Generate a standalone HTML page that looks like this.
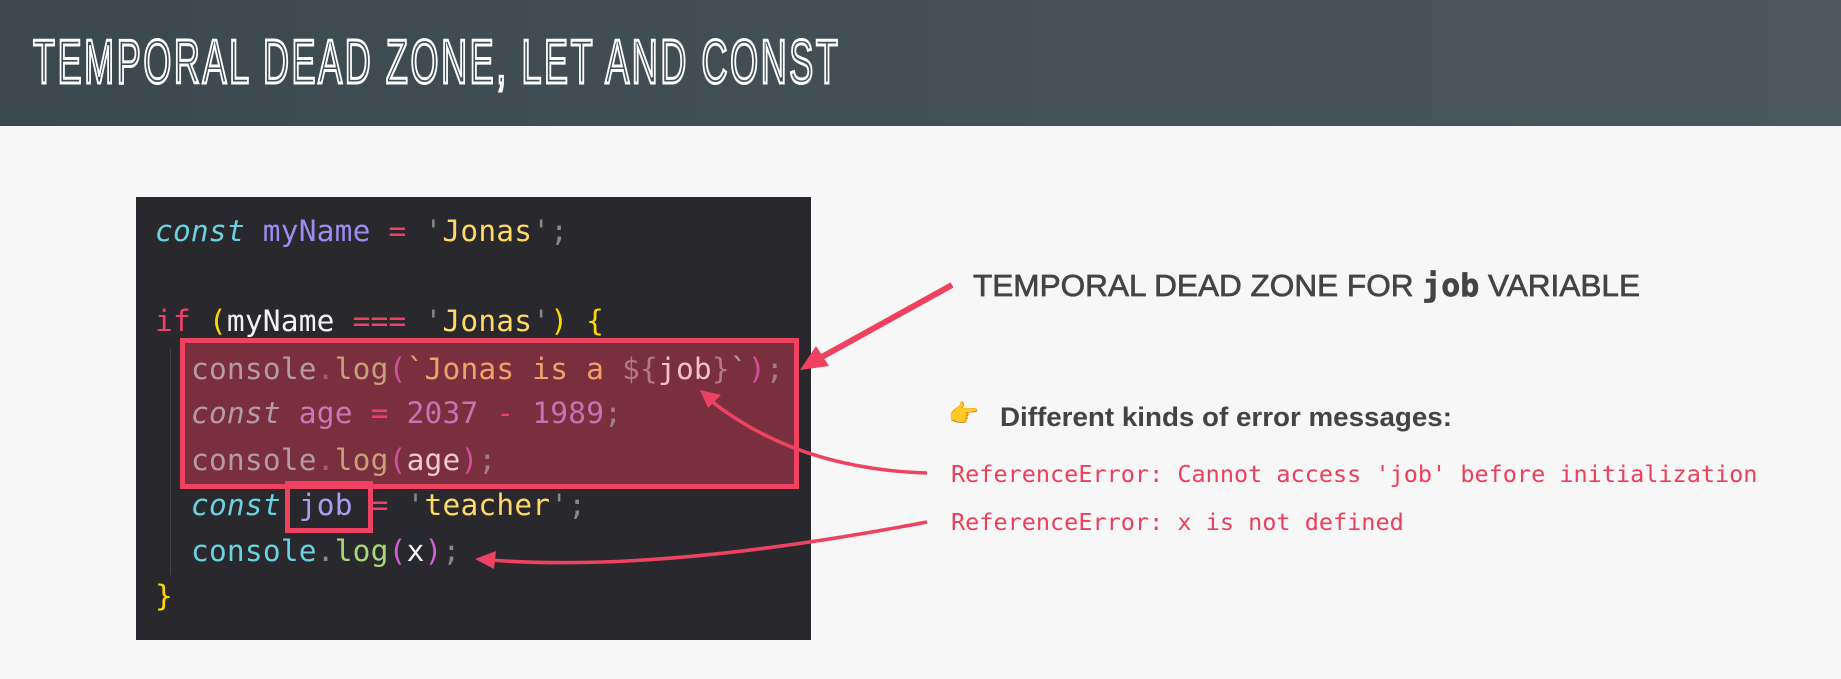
<!DOCTYPE html>
<html><head><meta charset="utf-8"><style>
html,body{margin:0;padding:0}
body{width:1841px;height:679px;background:#f7f7f7;position:relative;overflow:hidden;font-family:"Liberation Sans",sans-serif}
.hdr{position:absolute;left:0;top:0;width:1841px;height:126px;background:linear-gradient(90deg,#3b494f,#4a585d)}
.code{position:absolute;left:136px;top:197px;width:675px;height:443px;background:#29292d}
.ln{position:absolute;font-family:"DejaVu Sans Mono","Liberation Mono",monospace;font-size:29.5px;white-space:pre;line-height:40px;letter-spacing:0.2px}
.i{font-style:italic}
.rbox{position:absolute;left:180px;top:338px;width:609px;height:141px;background:#7a2f3f;border:5px solid #ef4260}
.jbox{position:absolute;left:285px;top:481px;width:78px;height:42px;border:5px solid #ef4260}
.guide{position:absolute;left:170px;top:349px;width:1px;height:226px;background:#444}
.err{position:absolute;left:951px;font-family:"DejaVu Sans Mono","Liberation Mono",monospace;font-size:23.5px;color:#ec3f5c;white-space:pre}
.ttl{position:absolute;left:33px;top:28px;font-family:"Liberation Sans",sans-serif;font-size:62px;line-height:70px;color:transparent;-webkit-text-stroke:3px #fff;white-space:pre;transform:scaleX(0.58);transform-origin:0 0;letter-spacing:4.5px}
</style></head><body>
<div class="hdr"></div>
<div class="ttl">TEMPORAL DEAD ZONE, LET AND CONST</div>
<div class="code"></div>
<div class="rbox"></div>
<div class="jbox"></div>
<div class="guide"></div>
<div class="ln" style="left:155px;top:211px"><span class="i" style="color:#6ad1df">const</span> <span style="color:#9b8cf0">myName</span> <span style="color:#f0406a">=</span> <span style="color:#888">'</span><span style="color:#ffd866">Jonas</span><span style="color:#888">'</span><span style="color:#888">;</span></div>
<div class="ln" style="left:155px;top:301px"><span style="color:#f0406a">if</span> <span style="color:#ffd700">(</span><span style="color:#f2f2f2">myName</span> <span style="color:#f0406a">===</span> <span style="color:#888">'</span><span style="color:#ffd866">Jonas</span><span style="color:#888">'</span><span style="color:#ffd700">)</span> <span style="color:#ffd700">{</span></div>
<div class="ln" style="left:191px;top:349px"><span style="color:#b59aa6">console</span><span style="color:#a06070">.</span><span style="color:#c6a078">log</span><span style="color:#d2509a">(</span><span style="color:#f2a06a">`Jonas is a </span><span style="color:#b07a80">${</span><span style="color:#f2c2c8">job</span><span style="color:#b07a80">}</span><span style="color:#b99aa6">`</span><span style="color:#d2509a">)</span><span style="color:#a08088">;</span></div>
<div class="ln" style="left:191px;top:393px"><span class="i" style="color:#b49aa6">const</span> <span style="color:#c778b6">age</span> <span style="color:#f0406a">=</span> <span style="color:#c274b4">2037</span> <span style="color:#f0406a">-</span> <span style="color:#c274b4">1989</span><span style="color:#a08088">;</span></div>
<div class="ln" style="left:191px;top:440px"><span style="color:#b59aa6">console</span><span style="color:#a06070">.</span><span style="color:#c6a078">log</span><span style="color:#d2509a">(</span><span style="color:#f2c8d0">age</span><span style="color:#d2509a">)</span><span style="color:#a08088">;</span></div>
<div class="ln" style="left:191px;top:485px"><span class="i" style="color:#6ad1df">const</span> <span style="color:#a99ff0">job</span> <span style="color:#f0406a">=</span> <span style="color:#888">'</span><span style="color:#ffd866">teacher</span><span style="color:#888">'</span><span style="color:#888">;</span></div>
<div class="ln" style="left:191px;top:531px"><span style="color:#6ad1df">console</span><span style="color:#888">.</span><span style="color:#a6d878">log</span><span style="color:#d060d0">(</span><span style="color:#f2f2f2">x</span><span style="color:#d060d0">)</span><span style="color:#888">;</span></div>
<div class="ln" style="left:155px;top:576px"><span style="color:#ffd700">}</span></div>
<svg style="position:absolute;left:0;top:0" width="1841" height="679">
<text x="973" y="296" textLength="667" lengthAdjust="spacingAndGlyphs" font-family="Liberation Sans, sans-serif" font-size="31" fill="#444" stroke="#444" stroke-width="0.7"><tspan>TEMPORAL DEAD ZONE FOR </tspan><tspan font-family="DejaVu Sans Mono, monospace" font-weight="bold">job</tspan><tspan> VARIABLE</tspan></text>
<text x="1000" y="426" textLength="452" lengthAdjust="spacingAndGlyphs" font-family="Liberation Sans, sans-serif" font-size="27" font-weight="bold" fill="#444">Different kinds of error messages:</text>
<line x1="952" y1="285" x2="820" y2="358" stroke="#ef4260" stroke-width="6"/>
<polygon points="800,370 816,346 829,366" fill="#ef4260"/>
<path d="M927,473 C830,470 760,440 710,400" fill="none" stroke="#ef4260" stroke-width="3.5"/>
<polygon points="700,390 721,395 708,408" fill="#ef4260"/>
<path d="M927,522 C780,550 620,570 490,560" fill="none" stroke="#ef4260" stroke-width="3.5"/>
<polygon points="475,559 496,551 494,569" fill="#ef4260"/>
</svg>
<div style="position:absolute;left:948px;top:400px;font-size:25px;font-family:'Noto Color Emoji','DejaVu Sans',sans-serif;color:#e8a020">👉</div>
<div class="err" style="top:460px">ReferenceError: Cannot access 'job' before initialization</div>
<div class="err" style="top:508px">ReferenceError: x is not defined</div>
</body></html>
